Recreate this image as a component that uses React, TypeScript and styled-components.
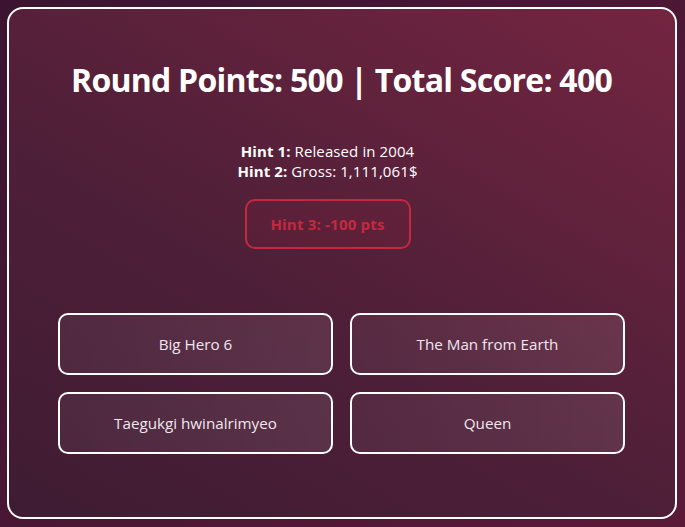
import React from "react";
import styled, { createGlobalStyle } from "styled-components";

const Global = createGlobalStyle`
  html, body { margin: 0; padding: 0; height: 100%; }
  body {
    font-family: "Open Sans", "Noto Sans", sans-serif;
    background: linear-gradient(135deg, #3c1430 0%, #4a1735 50%, #5a1a37 100%);
    min-height: 527px;
  }
`;

const Page = styled.div`
  padding: 7px 8px 8px 7px;
  box-sizing: border-box;
  height: 527px;
  display: flex;
`;

const Card = styled.div`
  flex: 1;
  border: 2px solid #ffffff;
  border-radius: 16px;
  background: linear-gradient(30deg, #3e1c33 0%, #4f1f38 45%, #742540 100%);
  display: flex;
  flex-direction: column;
  align-items: center;
  padding: 48px 50px 0 49px;
  color: #ffffff;
`;

const Title = styled.h1`
  margin: 0;
  font-size: 32px;
  font-weight: 700;
  letter-spacing: -0.75px;
  line-height: 46px;
`;

const HintArea = styled.div`
  margin-top: 38px;
  display: flex;
  flex-direction: column;
  align-items: center;
  margin-right: 28px;
`;

const HintLine = styled.div`
  font-size: 15px;
  line-height: 20px;
  letter-spacing: 0.1px;
  b { font-weight: 700; }
`;

const HintButton = styled.button`
  margin-top: 18px;
  width: 166px;
  height: 50px;
  border: 2px solid #c6283f;
  border-radius: 10px;
  background: rgba(200, 40, 63, 0.08);
  color: #c6283f;
  font-family: inherit;
  font-weight: 700;
  font-size: 15px;
  letter-spacing: 0.2px;
`;

const Grid = styled.div`
  margin-top: 64px;
  align-self: stretch;
  display: grid;
  grid-template-columns: 1fr 1fr;
  column-gap: 17px;
  row-gap: 17px;
`;

const Answer = styled.button`
  height: 62px;
  border: 2px solid #ffffff;
  border-radius: 10px;
  background: linear-gradient(90deg, rgba(255,255,255,0.05), rgba(255,255,255,0.09));
  color: #f1e6ee;
  font-family: inherit;
  font-size: 15.2px;
  letter-spacing: 0;
`;

const answers = ["Big Hero 6", "The Man from Earth", "Taegukgi hwinalrimyeo", "Queen"];

export default function App() {
  return (
    <>
      <Global />
      <Page>
        <Card>
          <Title>Round Points: 500 | Total Score: 400</Title>
          <HintArea>
            <HintLine><b>Hint 1:</b> Released in 2004</HintLine>
            <HintLine><b>Hint 2:</b> Gross: 1,111,061$</HintLine>
            <HintButton>Hint 3: -100 pts</HintButton>
          </HintArea>
          <Grid>
            {answers.map((a) => (
              <Answer key={a}>{a}</Answer>
            ))}
          </Grid>
        </Card>
      </Page>
    </>
  );
}
